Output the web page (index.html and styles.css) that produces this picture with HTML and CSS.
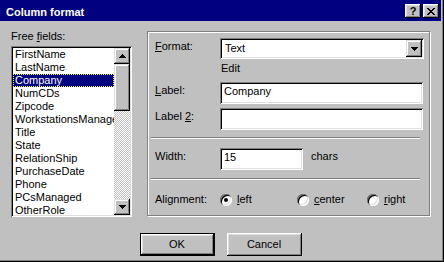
FILE: index.html
```html
<!DOCTYPE html>
<html>
<head>
    <title>Column format</title>
    <link rel="stylesheet" href="styles.css">
</head>
<body>
<div class="window">
    <div class="titlebar">
        <span class="title">Column format</span>
        <span class="tb-buttons">
            <span class="tb-btn help">?</span>
            <span class="tb-btn">
                <svg width="8" height="7" viewBox="0 0 8 7" shape-rendering="crispEdges"><path d="M0 0h2v1H0zM6 0h2v1H6zM1 1h2v1H1zM5 1h2v1H5zM2 2h4v1H2zM3 3h2v1H3zM2 4h4v1H2zM1 5h2v1H1zM5 5h2v1H5zM0 6h2v1H0zM6 6h2v1H6z"/></svg>
            </span>
        </span>
    </div>

    <div class="content">
        <div class="fields">
            <div class="caption">Free <u>f</u>ields:</div>
            <div class="listbox">
                <ul class="items">
                    <li>FirstName</li>
                    <li>LastName</li>
                    <li class="sel">Company</li>
                    <li>NumCDs</li>
                    <li>Zipcode</li>
                    <li>WorkstationsManaged</li>
                    <li>Title</li>
                    <li>State</li>
                    <li>RelationShip</li>
                    <li>PurchaseDate</li>
                    <li>Phone</li>
                    <li>PCsManaged</li>
                    <li>OtherRole</li>
                </ul>
                <div class="scrollbar">
                    <div class="sb-btn">
                        <svg width="7" height="4" viewBox="0 0 7 4" shape-rendering="crispEdges"><path d="M3 0h1v1H3zM2 1h3v1H2zM1 2h5v1H1zM0 3h7v1H0z"/></svg>
                    </div>
                    <div class="sb-thumb"></div>
                    <div class="sb-track"></div>
                    <div class="sb-btn">
                        <svg width="7" height="4" viewBox="0 0 7 4" shape-rendering="crispEdges"><path d="M0 0h7v1H0zM1 1h5v1H1zM2 2h3v1H2zM3 3h1v1H3z"/></svg>
                    </div>
                </div>
            </div>
        </div>

        <div class="group">
            <div class="row row-format">
                <label><u>F</u>ormat:</label>
                <div class="combo">
                    <span class="combo-text">Text</span>
                    <span class="sb-btn combo-btn">
                        <svg width="7" height="4" viewBox="0 0 7 4" shape-rendering="crispEdges"><path d="M0 0h7v1H0zM1 1h5v1H1zM2 2h3v1H2zM3 3h1v1H3z"/></svg>
                    </span>
                </div>
            </div>
            <div class="hint">Edit</div>

            <div class="row row-label">
                <label><u>L</u>abel:</label>
                <div class="edit wide">Company</div>
            </div>
            <div class="row row-label2">
                <label>Label <u>2</u>:</label>
                <div class="edit wide"></div>
            </div>

            <div class="sep"></div>

            <div class="row row-width">
                <label>Width:</label>
                <div class="edit narrow">15</div>
                <span class="unit">chars</span>
            </div>

            <div class="sep sep-2"></div>

            <div class="row row-align">
                <label>Alignment:</label>
                <span class="opt opt-left"><span class="radio checked"></span><span><u>l</u>eft</span></span>
                <span class="opt opt-center"><span class="radio"></span><span><u>c</u>enter</span></span>
                <span class="opt"><span class="radio"></span><span><u>r</u>ight</span></span>
            </div>
        </div>
    </div>

    <div class="buttons">
        <button class="btn default">OK</button>
        <button class="btn">Cancel</button>
    </div>
</div>
</body>
</html>
```

FILE: styles.css
```css
body {
    margin: 0;
    font-family: "Liberation Sans", Arial, sans-serif;
    font-size: 11px;
    line-height: 13px;
    color: #000;
    background: #c0c0c0;
}

u {
    text-decoration-thickness: 1px;
    text-underline-offset: 1px;
}

.window {
    width: 444px;
    height: 262px;
    box-sizing: border-box;
    background: #c0c0c0;
    border-right: 1px solid #000;
    border-bottom: 1px solid #000;
    box-shadow: inset -1px -1px #808080;
    padding: 0 2px 2px 0;
    display: flex;
    flex-direction: column;
}

/* title bar */
.titlebar {
    height: 21px;
    background: #000080;
    color: #fff;
    display: flex;
    justify-content: space-between;
    align-items: flex-start;
}

.title {
    font-weight: bold;
    padding: 6px 0 0 6px;
}

.tb-buttons {
    display: flex;
    gap: 2px;
    margin: 4px 2px 0 0;
}

.tb-btn {
    width: 16px;
    height: 14px;
    box-sizing: border-box;
    background: #c0c0c0;
    color: #000;
    font-weight: bold;
    display: flex;
    align-items: center;
    justify-content: center;
    box-shadow: inset -1px -1px #000, inset 1px 1px #fff, inset -2px -2px #808080, inset 2px 2px #dfdfdf;
}

/* main area */
.content {
    display: flex;
    align-items: flex-start;
    padding: 9px 0 0 11px;
}

.fields {
    width: 121px;
}

.caption {
    height: 13px;
    margin-bottom: 3px;
}

.listbox {
    height: 171px;
    box-sizing: border-box;
    padding: 2px;
    display: flex;
    background: #fff;
    box-shadow: inset 1px 1px #808080, inset -1px -1px #fff, inset 2px 2px #000, inset -2px -2px #dfdfdf;
}

.items {
    flex: 1;
    list-style: none;
    margin: 0;
    padding: 0;
    overflow: hidden;
}

.items li {
    height: 13px;
    padding-left: 2px;
    white-space: nowrap;
}

.items li.sel {
    background: #000080;
    color: #fff;
    outline: 1px dotted #ffff00;
    outline-offset: -1px;
}

.scrollbar {
    width: 16px;
    display: flex;
    flex-direction: column;
}

.sb-btn {
    height: 16px;
    box-sizing: border-box;
    background: #c0c0c0;
    display: flex;
    align-items: center;
    justify-content: center;
    box-shadow: inset -1px -1px #000, inset 1px 1px #dfdfdf, inset -2px -2px #808080, inset 2px 2px #fff;
}

.sb-thumb {
    height: 47px;
    background: #c0c0c0;
    box-shadow: inset -1px -1px #000, inset 1px 1px #dfdfdf, inset -2px -2px #808080, inset 2px 2px #fff;
}

.sb-track {
    flex: 1;
    background: repeating-conic-gradient(#fff 0 25%, #c0c0c0 0 50%) 0 0 / 2px 2px;
}

/* group box */
.group {
    margin: 1px 0 0 15px;
    width: 283px;
    height: 185px;
    box-sizing: border-box;
    border: 1px solid #808080;
    box-shadow: inset 1px 1px #fff, 1px 1px #fff;
    padding: 6px 0 0 7px;
}

.row {
    display: flex;
    align-items: flex-start;
}

.row label {
    width: 65px;
    padding-top: 2px;
}

.combo {
    width: 204px;
    height: 21px;
    box-sizing: border-box;
    padding: 2px;
    display: flex;
    background: #fff;
    box-shadow: inset 1px 1px #808080, inset -1px -1px #fff, inset 2px 2px #000, inset -2px -2px #dfdfdf;
}

.combo-text {
    flex: 1;
    padding: 2px 0 0 3px;
}

.combo-btn {
    width: 16px;
    height: 17px;
}

.hint {
    margin-top: 3px;
    padding-left: 66px;
}

.edit {
    height: 22px;
    box-sizing: border-box;
    padding: 3px 3px 0 4px;
    background: #fff;
    box-shadow: inset 1px 1px #808080, inset -1px -1px #fff, inset 2px 2px #000, inset -2px -2px #dfdfdf;
}

.edit.wide {
    width: 203px;
}

.edit.narrow {
    width: 83px;
}

.row-label {
    margin-top: 7px;
}

.row-label2 {
    margin-top: 4px;
}

.sep {
    margin: 7px 0 0 -4px;
    width: 269px;
    border-top: 1px solid #808080;
    border-bottom: 1px solid #fff;
}

.row-width {
    margin-top: 9px;
}

.unit {
    margin-left: 8px;
    padding-top: 2px;
}

.sep-2 {
    margin-top: 8px;
}

.row-align {
    margin-top: 12px;
}

.opt {
    display: flex;
    align-items: center;
    gap: 5px;
    height: 15px;
}

.row-align label {
    padding-top: 0;
    line-height: 15px;
}

.opt-left {
    width: 77px;
}

.opt-center {
    width: 70px;
}

.radio {
    width: 12px;
    height: 12px;
    border-radius: 50%;
    background: #fff;
    display: flex;
    align-items: center;
    justify-content: center;
    box-shadow: inset 1px 1px #808080, inset -1px -1px #fff, inset 2px 2px #000, inset -2px -2px #dfdfdf;
}

.radio.checked::after {
    content: "";
    width: 4px;
    height: 4px;
    border-radius: 50%;
    background: #000;
}

/* bottom buttons */
.buttons {
    display: flex;
    justify-content: center;
    gap: 12px;
    margin-top: 16px;
}

.btn {
    width: 75px;
    height: 23px;
    box-sizing: border-box;
    border: none;
    padding: 0;
    font: inherit;
    color: #000;
    background: #c0c0c0;
    box-shadow: inset -1px -1px #000, inset 1px 1px #fff, inset -2px -2px #808080, inset 2px 2px #dfdfdf;
}

.btn.default {
    border: 1px solid #000;
}
```
